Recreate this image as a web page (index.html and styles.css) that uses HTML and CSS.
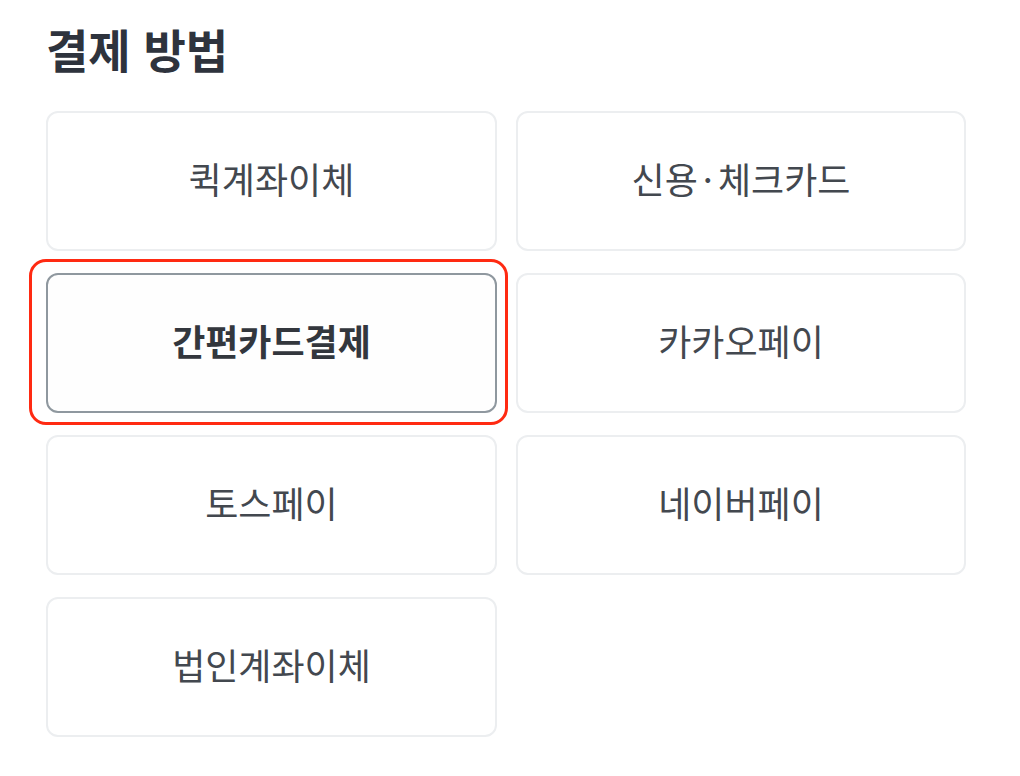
FILE: index.html
```html
<!DOCTYPE html>
<html lang="ko">
<head>
<meta charset="utf-8">
<link rel="stylesheet" href="styles.css">
</head>
<body>
<section class="payment">
  <h2 class="title">결제 방법</h2>
  <div class="grid">
    <button class="option">퀵계좌이체</button>
    <button class="option">신용<span class="dot">·</span>체크카드</button>
    <button class="option selected">간편카드결제</button>
    <button class="option">카카오페이</button>
    <button class="option">토스페이</button>
    <button class="option">네이버페이</button>
    <button class="option">법인계좌이체</button>
  </div>
</section>
</body>
</html>
```
FILE: styles.css
```css
html, body {
  margin: 0;
  padding: 0;
  background: #ffffff;
}
body {
  font-family: "Noto Sans CJK KR", "Noto Sans", sans-serif;
}
.payment {
  padding: 18px 0 0 46px;
  width: 920px;
}
.title {
  margin: 0 0 33px 0;
  font-size: 46px;
  line-height: 60px;
  font-weight: 700;
  color: #2e333d;
  letter-spacing: 0;
}
.grid {
  display: grid;
  grid-template-columns: 451px 450px;
  grid-auto-rows: 140px;
  column-gap: 19px;
  row-gap: 22px;
}
.option {
  position: relative;
  box-sizing: border-box;
  margin: 0;
  padding: 0 0 6px 0;
  background: #ffffff;
  border: 2px solid #eceef0;
  border-radius: 12px;
  font-family: inherit;
  font-size: 36px;
  font-weight: 400;
  color: #43484f;
  text-align: center;
  cursor: pointer;
}
.dot {
  margin: 0 5px;
}
.option.selected {
  border-color: #8f989f;
  font-weight: 700;
  color: #33373d;
  background: #fefefe;
}
.option.selected::after {
  content: "";
  position: absolute;
  left: -19px;
  top: -16px;
  right: -13px;
  bottom: -14px;
  border: 3px solid #ff2a12;
  border-radius: 17px;
  pointer-events: none;
}
```
